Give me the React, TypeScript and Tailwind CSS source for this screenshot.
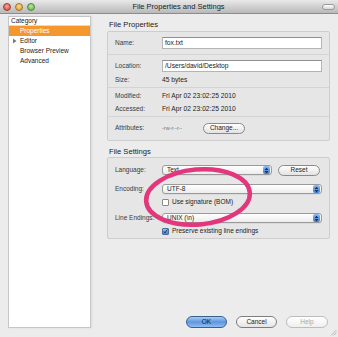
import React from "react";

const Stepper = () => (
  <span className="ml-auto mr-[1px] flex h-[8px] w-[7px] items-center justify-center rounded-[2px] bg-gradient-to-b from-[#8fbaf0] to-[#3d7fd6]">
    <svg width="5" height="7" viewBox="0 0 5 7">
      <path d="M0.5 3 L2.5 0.8 L4.5 3 Z M0.5 4 L2.5 6.2 L4.5 4 Z" fill="#13305a" />
    </svg>
  </span>
);

function Select({ value, className }: { value: string; className: string }) {
  return (
    <div
      className={
        "flex h-[10px] items-center rounded-[3px] border border-[#9a9a9a] bg-gradient-to-b from-white to-[#ececec] pl-[4px] shadow-[0_1px_0_rgba(0,0,0,0.05)] " +
        className
      }
    >
      <span className="text-[6.5px] leading-none text-[#222]">{value}</span>
      <Stepper />
    </div>
  );
}

function Pill({
  label,
  className,
  textClass,
}: {
  label: string;
  className: string;
  textClass?: string;
}) {
  return (
    <div
      className={
        "flex items-center justify-center rounded-full border text-[6.5px] leading-none " +
        className +
        " " +
        (textClass ?? "text-[#222]")
      }
    >
      {label}
    </div>
  );
}

function Check({ checked }: { checked?: boolean }) {
  if (checked)
    return (
      <span className="flex h-[7px] w-[7px] items-center justify-center rounded-[1px] border border-[#4a6f9e] bg-gradient-to-b from-[#9cc3f2] to-[#3e7fd4]">
        <svg width="7" height="7" viewBox="0 0 7 7">
          <path d="M1.2 3.4 L2.8 5.3 L6.2 0.6" stroke="#10243f" strokeWidth="1.3" fill="none" />
        </svg>
      </span>
    );
  return <span className="h-[7px] w-[7px] rounded-[1px] border border-[#8a8a8a] bg-white" />;
}

function Input({ value }: { value: string }) {
  return (
    <div className="flex h-[12px] w-[160px] items-center border border-[#b4b4b4] border-t-[#8f8f8f] bg-white pl-[2px] text-[6.7px] text-[#222]">
      {value}
    </div>
  );
}

function Label({ children }: { children: React.ReactNode }) {
  return <span className="w-[47px] shrink-0 text-[6.5px] leading-none text-[#3a3a3a]">{children}</span>;
}

export default function App() {
  const font = { fontFamily: '"Liberation Sans", Arial, sans-serif' };
  return (
    <div className="relative flex h-[337px] w-[338px] flex-col overflow-hidden bg-[#ececec]" style={font}>
      {/* title bar */}
      <div className="relative flex h-[14px] shrink-0 items-center border-b border-[#8c8c8c] bg-gradient-to-b from-[#e9e9e9] to-[#b9b9b9]">
        <div className="ml-[3px] flex gap-[4px]">
          <span className="h-[8px] w-[8px] rounded-full border border-[#9c3b33] bg-[radial-gradient(circle_at_50%_35%,#f7a39a,#d6463a)]" />
          <span className="h-[8px] w-[8px] rounded-full border border-[#a07424] bg-[radial-gradient(circle_at_50%_35%,#fbd98c,#df9a2a)]" />
          <span className="h-[8px] w-[8px] rounded-full border border-[#4f8a37] bg-[radial-gradient(circle_at_50%_35%,#bde6a0,#5fae3f)]" />
        </div>
        <span className="flex-1 text-center text-[7.5px] leading-none text-[#222]">File Properties and Settings</span>
        <span className="mr-[3px] h-[6px] w-[13px] rounded-[3px] border border-[#9a9a9a] bg-gradient-to-b from-white to-[#d4d4d4]" />
      </div>

      <div className="flex flex-1 pb-[9px] pl-[8px] pr-[8px] pt-[2px]">
        {/* category list */}
        <div className="flex w-[83px] shrink-0 flex-col border border-[#c6c6c6] bg-white shadow-[1px_0_2px_rgba(0,0,0,0.08)]">
          <div className="flex h-[9px] items-center border-b border-[#dcdcdc] pl-[2px] text-[6.5px] leading-none text-[#222]">
            Category
          </div>
          <div className="flex h-[10px] items-center bg-[#f4982e] pl-[11px] text-[6.5px] leading-none text-white">
            Properties
          </div>
          <div className="flex h-[10px] items-center pl-[3px] text-[6.5px] leading-none text-[#222]">
            <svg width="8" height="6" viewBox="0 0 8 6">
              <path d="M1 0.5 L4.5 3 L1 5.5 Z" fill="#7a7a7a" />
            </svg>
            Editor
          </div>
          <div className="flex h-[10px] items-center pl-[11px] text-[6.5px] leading-none text-[#222]">Browser Preview</div>
          <div className="flex h-[10px] items-center pl-[11px] text-[6.5px] leading-none text-[#222]">Advanced</div>
        </div>

        {/* right side */}
        <div className="ml-[16px] flex flex-1 flex-col">
          <div className="flex h-[15px] items-center pl-[2px] pt-[3px] text-[7.6px] leading-none text-[#222]">File Properties</div>
          <div className="flex flex-col rounded-[2px] border border-[#cdcdcd] bg-[#e6e6e6] pl-[7px]">
            <div className="flex h-[22px] items-center">
              <Label>Name:</Label>
              <Input value="fox.txt" />
            </div>
            <div className="-ml-[7px] h-[1px] bg-[#d4d4d4]" />
            <div className="flex flex-col pt-[4px]">
              <div className="flex h-[14px] items-center">
                <Label>Location:</Label>
                <Input value="/Users/david/Desktop" />
              </div>
              <div className="flex h-[14px] items-center">
                <Label>Size:</Label>
                <span className="text-[6.7px] leading-none text-[#222]">45 bytes</span>
              </div>
            </div>
            <div className="-ml-[7px] h-[1px] bg-[#d4d4d4]" />
            <div className="flex flex-col pt-[2px]">
              <div className="flex h-[13px] items-center">
                <Label>Modified:</Label>
                <span className="text-[6.7px] leading-none text-[#222]">Fri Apr 02 23:02:25 2010</span>
              </div>
              <div className="flex h-[13px] items-center">
                <Label>Accessed:</Label>
                <span className="text-[6.7px] leading-none text-[#222]">Fri Apr 02 23:02:25 2010</span>
              </div>
            </div>
            <div className="-ml-[7px] h-[1px] bg-[#d4d4d4]" />
            <div className="flex h-[23px] items-center">
              <Label>Attributes:</Label>
              <span className="w-[41px] text-[5.5px] leading-none text-[#777]">-rw-r--r--</span>
              <Pill label="Change..." className="h-[11px] w-[42px] border-[#8a8a8a] bg-gradient-to-b from-white to-[#e2e2e2]" />
            </div>
          </div>

          <div className="flex h-[16px] items-center pl-[2px] pt-[6px] text-[7.6px] leading-none text-[#222]">File Settings</div>
          <div className="flex flex-col rounded-[2px] border border-[#cdcdcd] bg-[#e6e6e6] pb-[1px] pl-[7px] pt-[5px]">
            <div className="flex h-[14px] items-center">
              <Label>Language:</Label>
              <Select value="Text" className="w-[110px]" />
              <Pill label="Reset" className="ml-[6px] h-[11px] w-[42px] border-[#8a8a8a] bg-gradient-to-b from-white to-[#e2e2e2]" />
            </div>
            <div className="mt-[5px] flex h-[14px] items-center">
              <Label>Encoding:</Label>
              <Select value="UTF-8" className="w-[160px]" />
            </div>
            <div className="flex h-[12px] items-center">
              <span className="w-[47px] shrink-0" />
              <Check />
              <span className="ml-[3px] text-[6.5px] leading-none text-[#222]">Use signature (BOM)</span>
            </div>
            <div className="mt-[3px] flex h-[14px] items-center">
              <Label>Line Endings:</Label>
              <Select value="UNIX (\n)" className="w-[160px]" />
            </div>
            <div className="flex h-[12px] items-center">
              <span className="w-[47px] shrink-0" />
              <Check checked />
              <span className="ml-[3px] text-[6.5px] leading-none text-[#222]">Preserve existing line endings</span>
            </div>
          </div>

          <div className="mt-auto flex justify-end gap-[9px] pr-[2px]">
            <Pill
              label="OK"
              className="h-[12px] w-[41px] border-[#3c5f8f] bg-gradient-to-b from-[#a9cbf3] via-[#5d97df] to-[#8fbdf0]"
              textClass="text-[#0d1e36]"
            />
            <Pill label="Cancel" className="h-[12px] w-[41px] border-[#7e7e7e] bg-gradient-to-b from-white to-[#e4e4e4]" />
            <Pill
              label="Help"
              className="h-[12px] w-[42px] border-[#bdbdbd] bg-gradient-to-b from-white to-[#efefef]"
              textClass="text-[#a5a5a5]"
            />
          </div>
        </div>
      </div>

      {/* resize grip */}
      <svg className="absolute bottom-[1px] right-[1px]" width="7" height="7" viewBox="0 0 7 7">
        <path d="M6.5 1 L1 6.5 M6.5 3.5 L3.5 6.5" stroke="#a0a0a0" strokeWidth="0.7" />
      </svg>

      {/* pink annotation */}
      <svg className="pointer-events-none absolute left-0 top-0" width="338" height="337" viewBox="0 0 338 337">
        <ellipse
          cx="198"
          cy="197"
          rx="52"
          ry="27.5"
          transform="rotate(-5 198 197)"
          fill="none"
          stroke="#e2377c"
          strokeWidth="4.5"
        />
      </svg>
    </div>
  );
}
